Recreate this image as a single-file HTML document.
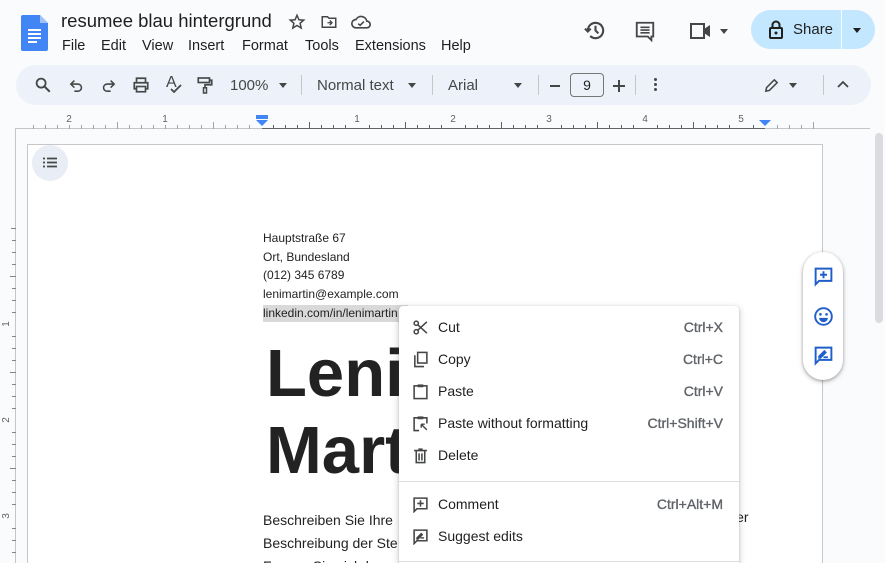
<!DOCTYPE html>
<html style="width:885px;height:563px;overflow:hidden"><head><meta charset="utf-8"><style>
*{margin:0;padding:0;box-sizing:border-box}
body{width:885px;height:563px;overflow:hidden;background:#f9fbfd;font-family:"Liberation Sans",Arial,sans-serif;position:relative;color:#1f1f1f}
.a{position:absolute}
.tb{color:#444746;font-size:15px}
.mn{position:absolute;top:38px;font-size:14.5px;color:#1f1f1f}
.mi{position:absolute;left:0;width:340px;height:32px;font-size:14px;color:#1f1f1f}
.mi .t{position:absolute;left:39px;top:7px}
.mi .k{position:absolute;right:16px;top:7px;color:#5f6368;font-size:14px;-webkit-text-stroke:0.35px #5f6368}
.mi svg{position:absolute;left:13px;top:7px}
</style></head><body>
<svg class="a" style="left:21px;top:15px" width="27" height="36" viewBox="0 0 27 36"><path d="M2 0h17l8 8v26a2 2 0 0 1-2 2H2a2 2 0 0 1-2-2V2a2 2 0 0 1 2-2z" fill="#4285f4"/><path d="M19 0v8h8z" fill="#a1c2fa"/><path d="M7 15h13M7 19h13M7 23h13M7 27h9" stroke="#fff" stroke-width="2"/></svg>
<div class="a" style="left:61px;top:10px;font-size:18.5px;color:#1f1f1f">resumee blau hintergrund</div>
<svg class="a" style="left:288px;top:13px" width="18" height="18" viewBox="0 0 24 24"><path d="M12 3l2.6 6 6.4.5-4.9 4.2 1.5 6.3L12 16.6 6.4 20l1.5-6.3L3 9.5 9.4 9z" fill="none" stroke="#444746" stroke-width="2"/></svg>
<svg class="a" style="left:320px;top:13px" width="18" height="18" viewBox="0 0 24 24"><path d="M3 5h7l2 2h9v12H3z" fill="none" stroke="#444746" stroke-width="2"/><path d="M10 13h6M13 10l3 3-3 3" fill="none" stroke="#444746" stroke-width="1.8"/></svg>
<svg class="a" style="left:351px;top:13px" width="20" height="18" viewBox="0 0 24 20"><path d="M6 17a5 5 0 0 1 0-10 7 7 0 0 1 13 2 4 4 0 0 1 0 8z" fill="none" stroke="#444746" stroke-width="2"/><path d="M8.5 12l2.5 2 4.5-4.5" fill="none" stroke="#444746" stroke-width="1.8"/></svg>
<span class="mn" style="left:62px">File</span><span class="mn" style="left:101px">Edit</span><span class="mn" style="left:142px">View</span><span class="mn" style="left:188px">Insert</span><span class="mn" style="left:242px">Format</span><span class="mn" style="left:305px">Tools</span><span class="mn" style="left:355px">Extensions</span><span class="mn" style="left:441px">Help</span>
<svg class="a" style="left:584px;top:19px" width="23" height="23" viewBox="0 0 24 24"><path d="M4 12a8 8 0 1 1 2.5 5.8" fill="none" stroke="#444746" stroke-width="2.2"/><path d="M1 10l3 3 3-3" fill="none" stroke="#444746" stroke-width="2.2"/><path d="M12 7v5l3 3" fill="none" stroke="#444746" stroke-width="2.2"/></svg>
<svg class="a" style="left:634px;top:20px" width="22" height="22" viewBox="0 0 24 24"><path d="M3 3h18v15h-2v4l-4-4H3z" fill="none" stroke="#444746" stroke-width="2"/><path d="M7 8h10M7 11h10M7 14h10" stroke="#444746" stroke-width="1.8"/></svg>
<svg class="a" style="left:689px;top:21px" width="24" height="20" viewBox="0 0 24 20"><path d="M2 3h13v14H2z" fill="none" stroke="#444746" stroke-width="2"/><path d="M15 8l6-4v12l-6-4z" fill="#444746"/></svg>
<div class="a" style="left:720px;top:29px;border:4.5px solid transparent;border-top:5px solid #444746"></div>
<div class="a" style="left:751px;top:10px;width:124px;height:39px;border-radius:20px;background:#c2e7ff"></div>
<div class="a" style="left:841px;top:10px;width:1px;height:39px;background:#f9fbfd"></div>
<svg class="a" style="left:768px;top:20px" width="16" height="19" viewBox="0 0 16 19"><rect x="2" y="8" width="12" height="10" rx="1" fill="none" stroke="#1f1f1f" stroke-width="2"/><path d="M4.5 8V5a3.5 3.5 0 0 1 7 0v3" fill="none" stroke="#1f1f1f" stroke-width="2"/><circle cx="8" cy="13" r="1.5" fill="#1f1f1f"/></svg>
<div class="a" style="left:793px;top:21px;font-size:15px;color:#1f1f1f">Share</div>
<div class="a" style="left:853px;top:28px;border:4.5px solid transparent;border-top:5px solid #1f1f1f"></div>
<div class="a" style="left:16px;top:65px;width:855px;height:40px;border-radius:20px;background:#edf2fa"></div>
<svg class="a" style="left:34px;top:76px" width="18" height="18" viewBox="0 0 24 24"><circle cx="9.5" cy="9.5" r="6" fill="none" stroke="#444746" stroke-width="2.4"/><path d="M14 14l7 7" stroke="#444746" stroke-width="2.6"/></svg>
<svg class="a" style="left:68px;top:77px" width="17" height="17" viewBox="0 0 24 24"><path d="M9 5L4 10l5 5" fill="none" stroke="#444746" stroke-width="2.2"/><path d="M4 10h10a5 5 0 0 1 0 10H9" fill="none" stroke="#444746" stroke-width="2.2"/></svg>
<svg class="a" style="left:100px;top:77px" width="17" height="17" viewBox="0 0 24 24"><path d="M15 5l5 5-5 5" fill="none" stroke="#444746" stroke-width="2.2"/><path d="M20 10H10a5 5 0 0 0 0 10h5" fill="none" stroke="#444746" stroke-width="2.2"/></svg>
<svg class="a" style="left:132px;top:76px" width="18" height="18" viewBox="0 0 24 24"><path d="M6 8V3h12v5M6 17H3V9h18v8h-3" fill="none" stroke="#444746" stroke-width="2.2"/><rect x="6" y="14" width="12" height="7" fill="none" stroke="#444746" stroke-width="2.2"/></svg>
<div class="a tb" style="left:166px;top:74px;font-size:16px">A</div>
<svg class="a" style="left:170px;top:84px" width="12" height="10" viewBox="0 0 12 10"><path d="M1 5l3 3 7-7" fill="none" stroke="#444746" stroke-width="1.8"/></svg>
<svg class="a" style="left:196px;top:76px" width="18" height="19" viewBox="0 0 24 24"><rect x="3" y="2" width="15" height="6" fill="none" stroke="#444746" stroke-width="2.2"/><path d="M18 5h3v6h-9v4" fill="none" stroke="#444746" stroke-width="2.2"/><rect x="10" y="15" width="4" height="7" fill="none" stroke="#444746" stroke-width="2"/></svg>
<div class="a tb" style="left:230px;top:77px">100%</div>
<div class="a" style="left:279px;top:83px;border:4.5px solid transparent;border-top:5px solid #444746"></div>
<div class="a" style="left:301px;top:75px;width:1px;height:20px;background:#c4c7c5"></div>
<div class="a tb" style="left:317px;top:77px">Normal text</div>
<div class="a" style="left:408px;top:83px;border:4.5px solid transparent;border-top:5px solid #444746"></div>
<div class="a" style="left:432px;top:75px;width:1px;height:20px;background:#c4c7c5"></div>
<div class="a tb" style="left:448px;top:77px">Arial</div>
<div class="a" style="left:514px;top:83px;border:4.5px solid transparent;border-top:5px solid #444746"></div>
<div class="a" style="left:538px;top:75px;width:1px;height:20px;background:#c4c7c5"></div>
<div class="a" style="left:550px;top:85px;width:10px;height:1.5px;background:#444746"></div>
<div class="a" style="left:570px;top:73px;width:34px;height:24px;border:1.3px solid #747775;border-radius:4px;font-size:14px;text-align:center;line-height:22px;color:#1f1f1f">9</div>
<div class="a" style="left:613px;top:85px;width:12px;height:1.5px;background:#444746"></div>
<div class="a" style="left:618.3px;top:80px;width:1.5px;height:12px;background:#444746"></div>
<div class="a" style="left:635px;top:75px;width:1px;height:20px;background:#c4c7c5"></div>
<div class="a" style="left:654px;top:78px;width:3px;height:3px;background:#444746;border-radius:2px;box-shadow:0 5px 0 #444746,0 10px 0 #444746"></div>
<svg class="a" style="left:763px;top:77px" width="17" height="17" viewBox="0 0 24 24"><path d="M4 20l1-5L16 4l4 4L9 19z" fill="none" stroke="#444746" stroke-width="2.2"/></svg>
<div class="a" style="left:789px;top:83px;border:4.5px solid transparent;border-top:5px solid #444746"></div>
<div class="a" style="left:823px;top:75px;width:1px;height:20px;background:#c4c7c5"></div>
<svg class="a" style="left:837px;top:80px" width="12" height="9" viewBox="0 0 12 9"><path d="M1 7l5-5 5 5" fill="none" stroke="#444746" stroke-width="1.8"/></svg>
<svg class="a" style="left:0;top:108px" width="885" height="455" viewBox="0 108 885 455">
<line x1="15" y1="128.5" x2="870" y2="128.5" stroke="#c4c7c5"/>
<line x1="15.5" y1="128" x2="15.5" y2="563" stroke="#c4c7c5"/>
<g stroke="#a0a4a8"><path d="M33.5 125v4M45.5 125v4M57.5 125v4M69.5 125v4M81.5 125v4M93.5 125v4M105.5 125v4M117.5 122v7M129.5 125v4M141.5 125v4M153.5 125v4M165.5 125v4M177.5 125v4M189.5 125v4M201.5 125v4M213.5 122v7M225.5 125v4M237.5 125v4M249.5 125v4"/></g>
<g stroke="#5f6368"><path d="M262 128.5h503"/>
<path d="M273.5 125v4M285.5 125v4M297.5 125v4M309.5 122v7M321.5 125v4M333.5 125v4M345.5 125v4M369.5 125v4M381.5 125v4M393.5 125v4M405.5 122v7M417.5 125v4M429.5 125v4M441.5 125v4M465.5 125v4M477.5 125v4M489.5 125v4M501.5 122v7M513.5 125v4M525.5 125v4M537.5 125v4M561.5 125v4M573.5 125v4M585.5 125v4M597.5 122v7M609.5 125v4M621.5 125v4M633.5 125v4M657.5 125v4M669.5 125v4M681.5 125v4M693.5 122v7M705.5 125v4M717.5 125v4M729.5 125v4M753.5 125v4"/></g>
<g stroke="#a0a4a8"><path d="M777.5 125v4M789.5 125v4M801.5 125v4M813.5 122v7"/></g>
<g font-size="10" fill="#5f6368" text-anchor="middle" font-family="Liberation Sans">
<text x="69" y="122">2</text><text x="165" y="122">1</text><text x="357" y="122">1</text><text x="453" y="122">2</text><text x="549" y="122">3</text><text x="645" y="122">4</text><text x="741" y="122">5</text></g>
<path d="M256 115h12v4h-12zM256 120h12l-6 6z" fill="#4285f4"/>
<path d="M759 120h12l-6 6z" fill="#4285f4"/>
<g stroke="#80868b"><path d="M11 228.5h5M12 240.5h4M12 252.5h4M12 264.5h4M10 276.5h6M12 288.5h4M12 300.5h4M12 312.5h4M12 336.5h4M12 348.5h4M12 360.5h4M10 372.5h6M12 384.5h4M12 396.5h4M12 408.5h4M12 432.5h4M12 444.5h4M12 456.5h4M10 468.5h6M12 480.5h4M12 492.5h4M12 504.5h4M12 528.5h4M12 540.5h4M12 552.5h4"/></g>
<g font-size="10" fill="#5f6368" font-family="Liberation Sans">
<text transform="translate(9,324) rotate(-90)" text-anchor="middle">1</text>
<text transform="translate(9,420) rotate(-90)" text-anchor="middle">2</text>
<text transform="translate(9,516) rotate(-90)" text-anchor="middle">3</text></g>
</svg>
<div class="a" style="left:27px;top:144px;width:796px;height:430px;background:#fff;border:1px solid #c7c7c7"></div>
<div class="a" style="left:875px;top:133px;width:8px;height:190px;background:#dadce0;border-radius:4px"></div>
<div class="a" style="left:32px;top:145px;width:36px;height:36px;border-radius:50%;background:#e9edf5"></div>
<svg class="a" style="left:42px;top:157px" width="16" height="12" viewBox="0 0 16 12"><path d="M1 1.5h2M5 1.5h10M1 5.5h2M5 5.5h10M1 9.5h2M5 9.5h10" stroke="#444746" stroke-width="1.8"/></svg>
<div class="a" style="left:263px;top:229px;font-size:12px;line-height:18.7px;color:#1f1f1f">Hauptstraße 67<br>Ort, Bundesland<br>(012) 345 6789<br>lenimartin@example.com<br><span style="background:#d9d9d9;padding:1px 10px 2px 0">linkedin.com/in/lenimartin</span></div>
<div class="a" style="left:266px;top:335px;font-size:67px;font-weight:bold;line-height:77px;color:#222">Leni<br>Mart</div>
<div class="a" style="left:263px;top:509px;font-size:14px;line-height:23px;color:#222;white-space:nowrap">Beschreiben Sie Ihre<br>Beschreibung der Ste<br>Fassen Sie sich kur</div>
<div class="a" style="left:733px;top:509px;font-size:14px;color:#222">ler</div>
<div class="a" style="left:803px;top:252px;width:40px;height:128px;border-radius:20px;background:#fff;box-shadow:0 1px 3px rgba(0,0,0,.3),0 2px 6px rgba(0,0,0,.15)"></div>
<svg class="a" style="left:813px;top:266px" width="21" height="21" viewBox="0 0 24 24"><path d="M3 3h18v14H7l-4 4z" fill="none" stroke="#1f5fc9" stroke-width="2.2"/><path d="M12 6v8M8 10h8" stroke="#1f5fc9" stroke-width="2.2"/></svg>
<svg class="a" style="left:813px;top:306px" width="21" height="21" viewBox="0 0 24 24"><circle cx="12" cy="12" r="9.5" fill="none" stroke="#1f5fc9" stroke-width="2.2"/><circle cx="8.5" cy="9.5" r="1.5" fill="#1f5fc9"/><circle cx="15.5" cy="9.5" r="1.5" fill="#1f5fc9"/><path d="M7 13.5h10a5 5 0 0 1-10 0z" fill="#1f5fc9"/></svg>
<svg class="a" style="left:813px;top:345px" width="21" height="21" viewBox="0 0 24 24"><path d="M3 3h18v14H7l-4 4z" fill="none" stroke="#1f5fc9" stroke-width="2.2"/><path d="M7 13l6-6 1.5 1.5-6 6H7zM12 14h5" stroke="#1f5fc9" stroke-width="2" fill="#1f5fc9"/></svg>
<div class="a" style="left:399px;top:306px;width:340px;height:257px;overflow:hidden;background:#fff;border-radius:4px 4px 0 0;box-shadow:0 2px 6px 2px rgba(60,64,67,.15),0 1px 2px rgba(60,64,67,.3)">
<div class="mi" style="top:6px"><svg width="17" height="17" viewBox="0 0 24 24"><circle cx="6" cy="6" r="3" fill="none" stroke="#444746" stroke-width="2.2"/><circle cx="6" cy="18" r="3" fill="none" stroke="#444746" stroke-width="2.2"/><path d="M8 8l13 12M8 16L21 4" stroke="#444746" stroke-width="2.2"/></svg><span class="t">Cut</span><span class="k">Ctrl+X</span></div>
<div class="mi" style="top:38px"><svg width="17" height="17" viewBox="0 0 24 24"><rect x="8" y="2" width="13" height="15" fill="none" stroke="#444746" stroke-width="2.2"/><path d="M4 6v16h13" fill="none" stroke="#444746" stroke-width="2.2"/></svg><span class="t">Copy</span><span class="k">Ctrl+C</span></div>
<div class="mi" style="top:70px"><svg width="17" height="17" viewBox="0 0 24 24"><rect x="3" y="4" width="18" height="18" fill="none" stroke="#444746" stroke-width="2.2"/><rect x="8" y="2" width="8" height="4" fill="#444746"/></svg><span class="t">Paste</span><span class="k">Ctrl+V</span></div>
<div class="mi" style="top:102px"><svg width="17" height="17" viewBox="0 0 24 24"><path d="M10 22H3V4h18v8" fill="none" stroke="#444746" stroke-width="2.2"/><rect x="8" y="2" width="8" height="4" fill="#444746"/><path d="M13 13l8 8M13 13v5M13 13h5" stroke="#444746" stroke-width="2"/></svg><span class="t">Paste without formatting</span><span class="k">Ctrl+Shift+V</span></div>
<div class="mi" style="top:134px"><svg width="17" height="17" viewBox="0 0 24 24"><path d="M6 6v16h12V6M3 5h18M9 3h6M10 9v10M14 9v10" fill="none" stroke="#444746" stroke-width="2.2"/></svg><span class="t">Delete</span></div>
<div class="a" style="left:0;top:175px;width:340px;height:1px;background:#dadce0"></div>
<div class="mi" style="top:183px"><svg width="17" height="17" viewBox="0 0 24 24"><path d="M3 3h18v15H7l-4 4z" fill="none" stroke="#444746" stroke-width="2.2"/><path d="M12 6v9M7.5 10.5h9" stroke="#444746" stroke-width="2.2"/></svg><span class="t">Comment</span><span class="k">Ctrl+Alt+M</span></div>
<div class="mi" style="top:215px"><svg width="17" height="17" viewBox="0 0 24 24"><path d="M3 3h18v15H7l-4 4z" fill="none" stroke="#444746" stroke-width="2.2"/><path d="M7 14l6-6 1.5 1.5-6 6H7zM12 14h5" stroke="#444746" stroke-width="2" fill="#444746"/></svg><span class="t">Suggest edits</span></div>
<div class="a" style="left:0;top:255px;width:340px;height:1px;background:#dadce0"></div>
</div>
</body></html>
